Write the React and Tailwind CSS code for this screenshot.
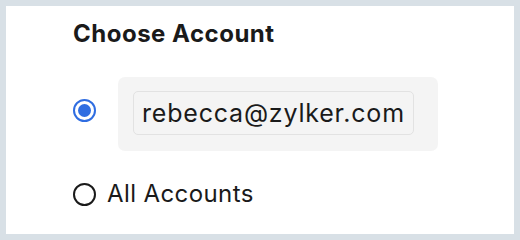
const Radio = ({ checked }) =>
  checked ? (
    <span className="flex h-[23px] w-[23px] shrink-0 items-center justify-center rounded-full border-2 border-[#2f6de1] bg-white">
      <span className="h-[13px] w-[13px] rounded-full bg-[#2f6de1]"></span>
    </span>
  ) : (
    <span className="h-[23px] w-[23px] shrink-0 rounded-full border-2 border-[#1a1a1a] bg-white"></span>
  );

export default function App() {
  return (
    <div className="h-[240px] w-[520px] bg-[#d8e0e6] p-[6px] font-['Inter',sans-serif] text-[#1a1a1a]">
      <div className="flex h-full flex-col bg-white pl-[67px] pt-[13px]">
        <h1 className="text-[24px] leading-[30px] font-bold tracking-[0.5px]">
          Choose Account
        </h1>
        <div className="mt-[28px] flex items-start">
          <span className="mt-[22px]">
            <Radio checked />
          </span>
          <div className="ml-[22px] rounded-[7px] bg-[#f4f4f4] pb-[16px] pl-[15px] pr-[24px] pt-[14px]">
            <div className="rounded-[5px] border border-[#e2e2e2] px-[8px] py-[5px] text-[25px] leading-[32px] tracking-[0.8px]">
              rebecca@zylker.com
            </div>
          </div>
        </div>
        <div className="mt-[29px] flex items-center gap-[11px]">
          <Radio />
          <span className="text-[24px] leading-[28px] tracking-[0.4px]">All Accounts</span>
        </div>
      </div>
    </div>
  );
}
